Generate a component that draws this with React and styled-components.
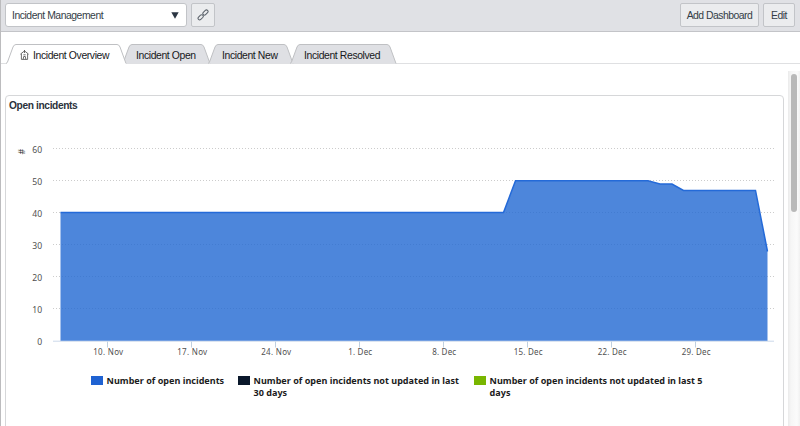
import React from "react";
import styled, { createGlobalStyle } from "styled-components";

const GlobalStyle = createGlobalStyle`
  * { box-sizing: border-box; }
  body { margin: 0; background: #fff; overflow: hidden; font-family: "Liberation Sans", Arial, sans-serif; color: #343d47; }
`;

const Page = styled.div`
  display: flex;
  flex-direction: column;
  width: 800px;
  height: 426px;
  overflow: hidden;
  border-left: 1px solid #bcbcbe;
  background: #fff;
`;

const Toolbar = styled.header`
  display: flex;
  flex: none;
  align-items: flex-start;
  gap: 4px;
  height: 32px;
  padding: 3px 5px 0 4px;
  background: #e0e1e5;
  border-bottom: 1px solid #c3c4c8;
`;

const Spacer = styled.div`
  flex: 1;
`;

const Select = styled.button`
  display: flex;
  align-items: center;
  justify-content: space-between;
  width: 182px;
  height: 24px;
  padding: 0 7px 0 6px;
  border: 1px solid #c2c4c8;
  border-radius: 3px;
  background: #fff;
  color: #343d47;
  font: 10.4px "Liberation Sans", Arial, sans-serif;
  letter-spacing: -0.46px;
`;

const Button = styled.button`
  display: flex;
  align-items: center;
  justify-content: center;
  width: ${(p) => p.$width}px;
  height: 24px;
  padding: 0;
  border: 1px solid #c2c4c8;
  border-radius: 2px;
  background: #ebecee;
  color: #343d47;
  font: 10.4px "Liberation Sans", Arial, sans-serif;
  letter-spacing: -0.5px;
  white-space: nowrap;
`;

const TabBar = styled.nav`
  display: flex;
  flex: none;
  height: 32px;
  padding: 12px 0 0 5px;
  border-bottom: 1px solid #dfe0e2;
`;

const Tab = styled.div`
  position: relative;
  z-index: ${(p) => (p.$active ? 1 : 0)};
  display: flex;
  align-items: center;
  flex: none;
  gap: 4px;
  width: ${(p) => p.$width}px;
  height: 20px;
  margin-right: ${(p) => p.$overlap}px;
  padding: 2px 0 0 14px;
  color: #16181b;
  font-size: 10.4px;
  letter-spacing: -0.38px;
  white-space: nowrap;
`;

const TabShape = styled.svg`
  position: absolute;
  inset: 0;
  z-index: -1;
`;

const TabText = styled.span`
  position: relative;
`;

const Content = styled.main`
  display: flex;
  flex: 1;
  min-height: 0;
`;

const Card = styled.section`
  flex: none;
  width: 779px;
  height: 340px;
  margin: 31px 0 0 4px;
  border: 1px solid #d6d7d9;
  border-radius: 4px;
`;

const CardTitle = styled.h2`
  height: 18px;
  margin: 0;
  padding: 3px 0 0 3px;
  color: #2b323b;
  font: bold 10.2px/13px "Liberation Sans", Arial, sans-serif;
  letter-spacing: -0.37px;
`;

const Chart = styled.svg`
  display: block;
  margin-top: 16px;
  font-family: "Noto Sans", sans-serif;
`;

const Legend = styled.div`
  display: flex;
  padding: 5px 0 0 85px;
`;

const LegendItem = styled.div`
  display: flex;
  flex: none;
  align-items: flex-start;
  gap: 3.6px;
  width: ${(p) => p.$width}px;
  color: #1c1c1c;
  font: bold 9.05px/12px "Noto Sans", sans-serif;
  white-space: pre-line;
`;

const Swatch = styled.i`
  flex: none;
  width: 12px;
  height: 9px;
  margin-top: 1px;
  background: ${(p) => p.$color};
`;

const Track = styled.div`
  flex: none;
  width: 12px;
  margin: 7px 0 0 4px;
  padding: 3px 0 0 3px;
  background: linear-gradient(90deg, #eaeaea 0, #f6f6f6 3px, #fbfbfb 9px, #f1f1f1 12px);
`;

const Thumb = styled.div`
  width: 6px;
  height: 138px;
  border-radius: 3px;
  background: #b9b9b9;
`;

const tabs = [
  { label: "Incident Overview", width: 121, overlap: -5, active: true },
  { label: "Incident Open", width: 89, overlap: -3 },
  { label: "Incident New", width: 86, overlap: -4 },
  { label: "Incident Resolved", width: 107, overlap: 0 },
];

const legend = [
  { lines: "Number of open incidents", color: "#1f62d2", width: 147 },
  { lines: "Number of open incidents not updated in last\n30 days", color: "#0a182b", width: 236 },
  { lines: "Number of open incidents not updated in last 5\ndays", color: "#79b600", width: 250 },
];

const yTicks = [
  [60, 149], [50, 181.5], [40, 213.5], [30, 245.5], [20, 277.5], [10, 309],
];
const xTicks = [
  ["10. Nov", 107.5, 30], ["17. Nov", 191.5, 30], ["24. Nov", 275.5, 30],
  ["1. Dec", 359.5, 24], ["8. Dec", 443.5, 24], ["15. Dec", 527.5, 29],
  ["22. Dec", 611.5, 29], ["29. Dec", 695.5, 29],
];
const line = "60.5,212.5 503.5,212.5 515.5,180.7 648,180.7 660,184 672,184 683.5,190.4 755.5,190.4 767.5,251.5";

function HomeIcon() {
  return (
    <svg width="9" height="10" viewBox="0 0 9 10" fill="none" stroke="#4a4a4a" strokeWidth=".8">
      <path d="M.4 4.2 4.5.9l4.1 3.3M1.4 3.8v5.6h6.2V3.8M4.5 0v3M3.2 9.2l.5-2.7h1.6l.5 2.7M3.4 4.8h2.2" />
    </svg>
  );
}

function LinkIcon() {
  return (
    <svg width="12" height="12" viewBox="0 0 12 12" fill="none" stroke="#596069" strokeWidth="1">
      <rect x="-.7" y="-1.6" width="6" height="3.2" rx="1.6" transform="translate(5 7) rotate(-45) translate(-4.2 0)" />
      <rect x="-.7" y="-1.6" width="6" height="3.2" rx="1.6" transform="translate(7.1 4.9) rotate(-45) translate(-.4 0)" />
    </svg>
  );
}

function TrendChart() {
  return (
    <Chart width="777" height="240" viewBox="6 130 777 240">
      <g stroke="#cccccc" strokeDasharray="1 2">
        {yTicks.map(([v, y]) => (
          <path key={v} d={`M53 ${Math.floor(y) - 0.5}H775`} />
        ))}
      </g>
      <path d="M53 341.2H774" stroke="#cbd8ea" />
      <polygon points={`60.5,340.7 ${line} 767.5,340.7`} fill="#2168d2" fillOpacity=".8" />
      <polyline points={line} fill="none" stroke="#246ad8" strokeWidth="1.5" />
      <g fill="#505050" fontSize="8.6">
        {[...yTicks, [0, 341.5]].map(([v, y]) => (
          <text key={v} x={v ? 32.2 : 37.2} y={y + 3.9} textLength={v ? 10 : 5}>{v}</text>
        ))}
      </g>
      <g fill="#505050" fontSize="8" textAnchor="middle">
        {xTicks.map(([label, x, w]) => (
          <React.Fragment key={label}>
            <path d={`M${x} 341.5v6`} stroke="#c0d0e0" />
            <text x={x + 0.7} y="355.3" textLength={w}>{label}</text>
          </React.Fragment>
        ))}
      </g>
      <text x="21.5" y="151.5" fill="#444" fontSize="9" textAnchor="middle" dominantBaseline="central" transform="rotate(-90 21.5 151.5)">#</text>
    </Chart>
  );
}

export default function App() {
  return (
    <>
      <GlobalStyle />
      <Page>
        <Toolbar>
          <Select>
            Incident Management
            <svg width="8" height="7" viewBox="0 0 8 7"><path d="M.3.3h7.4L4 6.8z" fill="#2b3643" /></svg>
          </Select>
          <Button $width={24} aria-label="Copy link"><LinkIcon /></Button>
          <Spacer />
          <Button $width={79}>Add Dashboard</Button>
          <Button $width={32}>Edit</Button>
        </Toolbar>
        <TabBar>
          {tabs.map(({ label, width: w, overlap, active }) => (
            <Tab key={label} $width={w} $overlap={overlap} $active={active}>
              <TabShape width={w} height="20" viewBox={`0 0 ${w} 20`}>
                <path
                  d={`M0 19.5 Q1 19 1.5 18L7 3Q8 .5 10 .5H${w - 10}Q${w - 8} .5 ${w - 7} 3L${w - 1} 19.5`}
                  fill={active ? "#fff" : "#dfe0e4"}
                  stroke="#bfc0c3"
                />
                {active && <path d={`M1 19.5H${w - 1.5}`} stroke="#fff" />}
              </TabShape>
              {active && <HomeIcon />}
              <TabText>{label}</TabText>
            </Tab>
          ))}
        </TabBar>
        <Content>
          <Card>
            <CardTitle>Open incidents</CardTitle>
            <TrendChart />
            <Legend>
              {legend.map(({ lines, color, width }) => (
                <LegendItem key={color} $width={width}>
                  <Swatch $color={color} />
                  <span>{lines}</span>
                </LegendItem>
              ))}
            </Legend>
          </Card>
          <Track><Thumb /></Track>
        </Content>
      </Page>
    </>
  );
}
